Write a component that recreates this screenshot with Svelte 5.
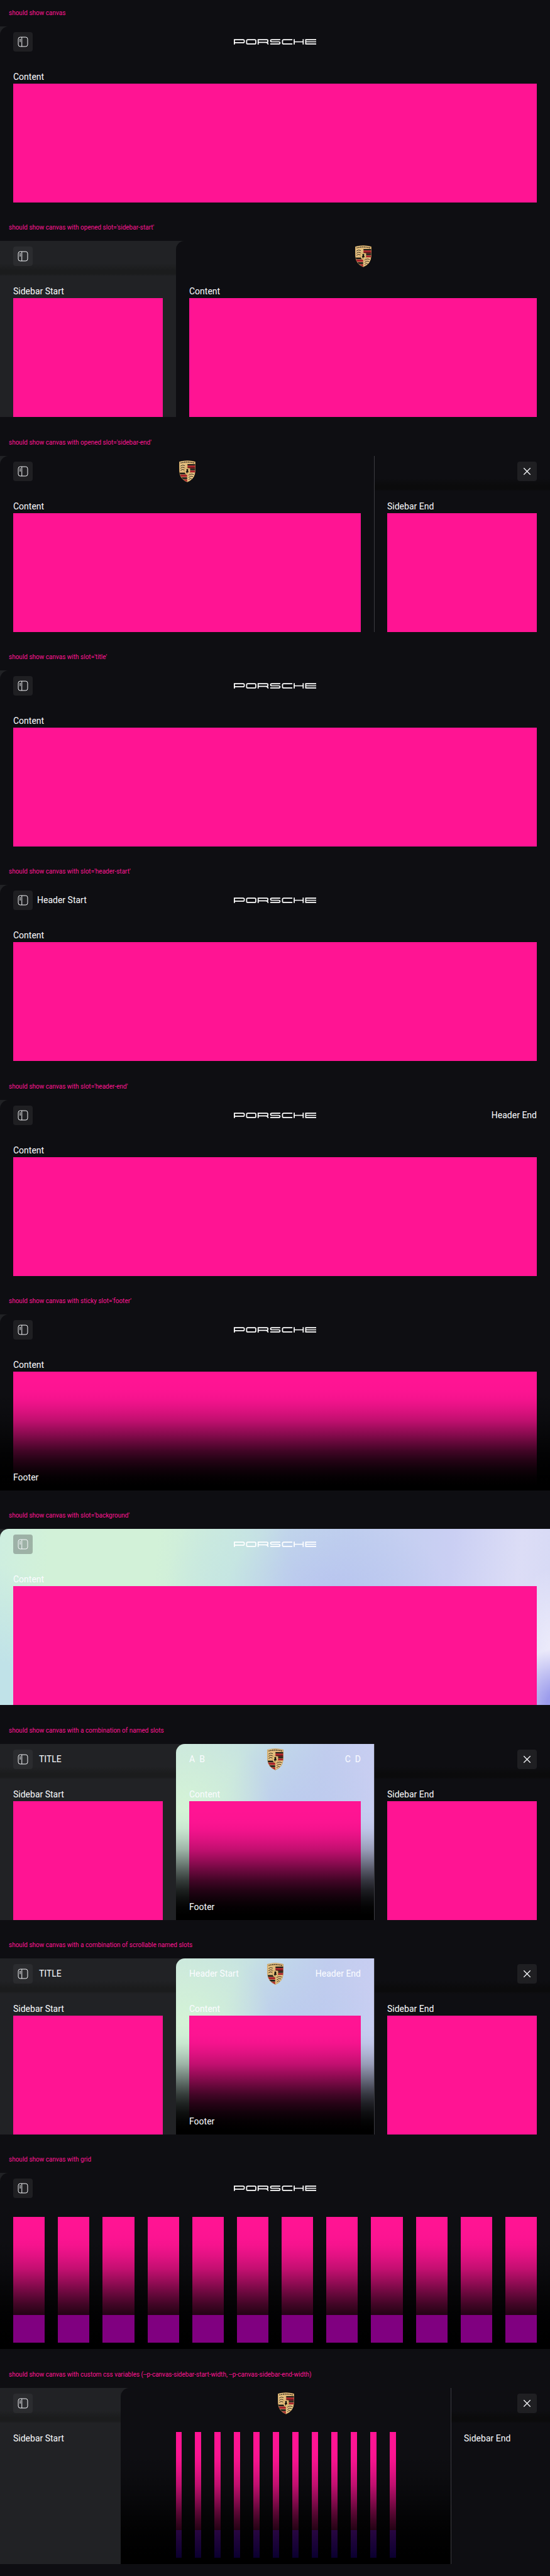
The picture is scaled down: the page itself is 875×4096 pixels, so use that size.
<script>
  const columns = Array.from({ length: 12 }, (_, i) => i);

  const stories = [
    { label: 'should show canvas', block: true },
    { label: "should show canvas with opened slot='sidebar-start'", start: 280, block: true },
    { label: "should show canvas with opened slot='sidebar-end'", end: 280, block: true },
    { label: "should show canvas with slot='title'", block: true },
    { label: "should show canvas with slot='header-start'", headerStart: ['Header Start'], block: true },
    { label: "should show canvas with slot='header-end'", headerEnd: ['Header End'], block: true },
    { label: "should show canvas with sticky slot='footer'", footer: 'text', block: true },
    { label: "should show canvas with slot='background'", background: 'wide', block: true },
    {
      label: 'should show canvas with a combination of named slots',
      start: 280, end: 280, title: 'TITLE', headerStart: ['A', 'B'], headerEnd: ['C', 'D'],
      footer: 'text', background: 'narrow', block: true
    },
    {
      label: 'should show canvas with a combination of scrollable named slots',
      start: 280, end: 280, title: 'TITLE', headerStart: ['Header Start'], headerEnd: ['Header End'],
      footer: 'text', background: 'narrow', block: true
    },
    { label: 'should show canvas with grid', grid: true, footer: 'purple' },
    {
      label: 'should show canvas with custom css variables (--p-canvas-sidebar-start-width, --p-canvas-sidebar-end-width)',
      start: 192, end: 158, grid: true, inset: true, footer: 'indigo'
    }
  ];
</script>

{#snippet toggle()}
  <button class="tool" type="button" aria-label="Toggle sidebar">
    <svg viewBox="0 0 24 24" aria-hidden="true">
      <rect x="3.5" y="3.5" width="17" height="17" rx="3.5" />
      <path d="M10 3.5v17M5.8 7.5h2.4M5.8 9.5h2.4M5.8 11.5h2.4" />
    </svg>
  </button>
{/snippet}

{#snippet wordmark()}
  <svg class="wordmark" viewBox="0 0 450 30" role="img" aria-label="Porsche">
    <path d="M3 30V3H51Q57 3 57 9V14Q57 20 51 20H3" />
    <rect x="70" y="3" width="50" height="24" rx="6" />
    <path d="M133 30V3H180Q186 3 186 8V12Q186 18 180 18H133M174 18Q187 18 187 30" />
    <path d="M254 3H208Q201 3 201 8V10Q201 15 208 15H245Q252 15 252 20V22Q252 27 245 27H199" />
    <path d="M320 3H273Q266 3 266 9V21Q266 27 273 27H320" />
    <path d="M330 0V30M379 0V30M330 15H379" />
    <path d="M450 3H393V27H450M393 15H450" />
  </svg>
{/snippet}

{#snippet crest(id)}
  <svg class="crest" viewBox="0 0 30 40" role="img" aria-label="Porsche crest">
    <defs>
      <linearGradient id="gold-{id}" x1="0" x2="1" y1="0" y2="1">
        <stop offset="0" stop-color="#e9c98b" />
        <stop offset=".5" stop-color="#dfb677" />
        <stop offset="1" stop-color="#f0d193" />
      </linearGradient>
      <clipPath id="shield-{id}">
        <path d="M.8 2.4Q15-1.6 29.2 2.4Q29.6 8 29.2 20Q28.6 33.5 15 39.2Q1.4 33.5.8 20Q.4 8 .8 2.4Z" />
      </clipPath>
    </defs>
    <path d="M.2 2Q15-2 29.8 2Q30.2 8 29.8 20Q29.2 34 15 40Q.8 34 .2 20Q-.2 8 .2 2Z" fill="#b48a4c" />
    <g clip-path="url(#shield-{id})">
      <path d="M0 0H30V40H0Z" fill="url(#gold-{id})" />
      <path d="M15 6.6H30V9.4H15ZM15 15H30V18H15ZM0 22H15V25.4H0ZM0 31H15V34H0Z" fill="#1a1c18" />
      <path d="M15 9.4H30V12.4H15ZM15 18.6H30V22H15ZM0 26H15V30H0ZM0 34.6H15V40H0Z" fill="#a8212a" />
      <path d="M15 12.6H30V15H15Z" fill="#5b1a1c" />
      <path d="M15 6.4V40M0 22H15M15 22.4H30M0 6.3Q15 4.4 30 6.3" fill="none" stroke="#d9ad68" stroke-width=".7" />
      <path d="M2.5 10.4Q6 7 10.5 9.6M2.5 14.4Q6 11 10 13.4M2.5 18.4Q6 15 9.4 17.4M17.5 27.4Q21 23.6 27 26M17.5 31.4Q21 27.4 25.4 29.4M17.5 35.4Q20 31.6 23 33.4" fill="none" stroke="#2c2418" stroke-width="1.1" />
      <path d="M2.6 4.6Q15 1.2 27.4 4.6" fill="none" stroke="#33281a" stroke-width="1.6" stroke-dasharray="2.4 .9" />
      <path d="M10 14.6Q15 13 20 14.6V20.6Q19.6 25 15 27Q10.4 25 10 20.6Z" fill="#e8c27d" stroke="#a37b3e" stroke-width=".5" />
      <path d="M13 16.6L15.6 15.4L17.2 17.4L16 19L17.6 20.4L16.8 22.4L15.4 21.4L14.6 25L13.6 22.2L12.2 20.6L13.8 18.8Z" fill="#17140f" />
    </g>
  </svg>
{/snippet}

<main class="page">
  {#each stories as story, index}
    <section class="story">
      <h2>{story.label}</h2>
      <div class="canvas">
        {#if story.start}
          <aside class="sidebar start" style:width="{story.start}px">
            <div class="bar">
              {@render toggle()}
              {#if story.title}<span class="title">{story.title}</span>{/if}
            </div>
            <div class="body">
              <p>Sidebar Start</p>
              {#if story.block}<div class="block"></div>{/if}
            </div>
          </aside>
        {/if}

        <div class="stage {story.background ?? ''}">
          <header>
            <div class="slot">
              {#if !story.start}{@render toggle()}{/if}
              {#each story.headerStart ?? [] as item}<span>{item}</span>{/each}
            </div>
            {#if story.start || story.end}
              {@render crest(index)}
            {:else}
              {@render wordmark()}
            {/if}
            <div class="slot last">
              {#each story.headerEnd ?? [] as item}<span>{item}</span>{/each}
            </div>
          </header>

          <div class="body">
            {#if story.grid}
              <div class="columns" class:inset={story.inset}>
                {#each columns as column (column)}<i></i>{/each}
              </div>
            {:else}
              <p>Content</p>
              <div class="block"></div>
            {/if}
          </div>

          {#if story.footer}
            <footer>
              {#if story.footer === 'text'}
                <p>Footer</p>
              {:else}
                <div class="columns low {story.footer}" class:inset={story.inset}>
                  {#each columns as column (column)}<i></i>{/each}
                </div>
              {/if}
            </footer>
          {/if}
        </div>

        {#if story.end}
          <aside class="sidebar end" style:width="{story.end}px">
            <div class="bar">
              <button class="tool close" type="button" aria-label="Close sidebar">
                <svg viewBox="0 0 24 24" aria-hidden="true"><path d="M6 6L18 18M18 6L6 18" /></svg>
              </button>
            </div>
            <div class="body">
              <p>Sidebar End</p>
              {#if story.block}<div class="block"></div>{/if}
            </div>
          </aside>
        {/if}
      </div>
    </section>
  {/each}
</main>

<style>
  :global(body) {
    margin: 0;
    background: #0e0e12;
  }

  .page {
    display: grid;
    grid-auto-rows: 1fr;
    min-height: 100vh;
    color: #fbfcff;
    font: 14px/21px Roboto, "Liberation Sans", sans-serif;
  }

  h2 {
    margin: 0;
    padding: 11px 14px;
    color: #ff1493;
    font: 400 10px/20px Roboto, "Liberation Sans", sans-serif;
  }

  p {
    margin: 0;
  }

  .canvas {
    display: flex;
    height: 280px;
    overflow: hidden;
    background: #212225;
  }

  .sidebar {
    box-sizing: border-box;
    display: grid;
    flex: none;
  }

  .sidebar > *,
  .stage > * {
    grid-area: 1 / 1;
  }

  .bar {
    box-sizing: border-box;
    display: flex;
    align-items: center;
    align-self: start;
    gap: 10px;
    height: 56px;
    padding: 0 21px 7px;
    background: linear-gradient(transparent 64%, #1b1c1d 84%, #1b1c1d 94%, transparent);
  }

  .end {
    border-left: 1px solid #3c3c41;
    background: #0e0e12;
  }

  .end .bar {
    justify-content: flex-end;
    background: linear-gradient(transparent 64%, #0b0b0c 84%, #0b0b0c 94%, transparent);
  }

  .end .body {
    padding-left: 20px;
  }

  .body {
    display: flex;
    flex-direction: column;
    padding: 70px 21px 0;
  }

  .block {
    flex: 1;
    background: #ff1493;
  }

  .stage {
    display: grid;
    grid-template-columns: minmax(0, 1fr);
    flex: 1;
    min-width: 0;
    overflow: hidden;
    border-top-left-radius: 14px;
    background: #0e0e12;
  }

  .wide {
    background:
      radial-gradient(ellipse 8% 32% at 101% 100%, #9c9cec 20%, transparent),
      radial-gradient(ellipse 9% 48% at 101% 70%, #efedfb, transparent),
      radial-gradient(ellipse 16% 80% at 0 100%, #c0e2e8 30%, transparent),
      radial-gradient(ellipse 20% 44% at 61% 36%, #b8c5ef, transparent),
      radial-gradient(ellipse 12% 60% at 42% 42%, #c4e5e2, transparent),
      linear-gradient(96deg, #ceeee0, #d2f1d8 9%, #d2f1d8 28%, #cae9df 40%, #c1d6ea 51%, #c0cfee 62%, #cacff3 80%, #dcddf6 92%, #d6d9f5);
  }

  .narrow {
    background:
      radial-gradient(ellipse 44% 44% at 4% 36%, #d4f3d6, transparent),
      radial-gradient(ellipse 40% 50% at 62% 42%, #bccaee, transparent),
      linear-gradient(98deg, #cbe7de, #c8e4e0 28%, #c1d8e9 50%, #c1cdee 68%, #cbcef3);
  }

  header {
    z-index: 1;
    display: grid;
    grid-template-columns: 1fr auto 1fr;
    align-items: center;
    align-self: start;
    height: 49px;
    padding: 0 21px;
  }

  .slot {
    display: flex;
    align-items: center;
    gap: 7px;
  }

  .last {
    justify-content: flex-end;
  }

  .tool {
    display: grid;
    place-items: center;
    width: 31px;
    height: 31px;
    padding: 0;
    border: 0;
    border-radius: 4px;
    background: rgba(63, 63, 66, 0.35);
  }

  .tool svg {
    width: 21px;
    height: 21px;
    fill: none;
    stroke: #fbfcff;
    stroke-width: 1.1;
  }

  .close svg {
    stroke-width: 1.5;
  }

  .wordmark {
    width: 131px;
    height: 9px;
    fill: none;
    stroke: #fff;
    stroke-width: 6;
  }

  .crest {
    width: 26px;
    height: 35px;
  }

  footer {
    z-index: 1;
    align-self: end;
    padding: 144px 21px 10px;
    background: linear-gradient(
      transparent,
      rgba(0, 0, 0, 0.01) 10%,
      rgba(0, 0, 0, 0.04) 17%,
      rgba(0, 0, 0, 0.12) 26%,
      rgba(0, 0, 0, 0.24) 36%,
      rgba(0, 0, 0, 0.45) 48%,
      rgba(0, 0, 0, 0.6) 56%,
      rgba(0, 0, 0, 0.74) 64%,
      rgba(0, 0, 0, 0.85) 72%,
      rgba(0, 0, 0, 0.93) 80%,
      rgba(0, 0, 0, 0.98) 88%,
      #000 95%
    );
  }

  .columns {
    display: grid;
    grid-template-columns: repeat(12, minmax(0, 1fr));
    flex: 1;
    column-gap: 21px;
  }

  .columns i {
    background: #ff1493;
  }

  .inset {
    box-sizing: border-box;
    width: 350px;
    max-width: 100%;
    margin: 0 auto;
  }

  .low {
    height: 44px;
  }

  .purple i {
    background: #800080;
  }

  .indigo i {
    background: linear-gradient(#280640, #0b0030);
  }
</style>
